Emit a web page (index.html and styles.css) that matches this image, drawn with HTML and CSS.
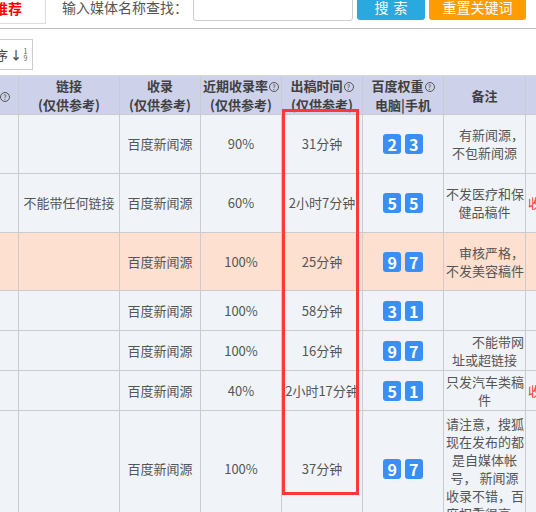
FILE: index.html
```html
<!DOCTYPE html>
<html lang="zh-CN">
<head>
<meta charset="utf-8">
<title>媒体资源</title>
<link rel="stylesheet" href="styles.css">
</head>
<body>
<div class="topbar">
  <div class="tab"><span class="tab-text">热门推荐</span></div>
  <span class="label">输入媒体名称查找：</span>
  <input class="search-input" type="text">
  <button class="btn btn-search">搜 索</button>
  <button class="btn btn-reset">重置关键词</button>
</div>
<div class="toolbar">
  <div class="sort-box"><span class="sort-text">默认排序</span><span class="sort-ico"><span class="arrow">↓</span><span class="nums"><i>1</i><i>9</i></span></span></div>
</div>
<table class="media">
  <colgroup>
    <col class="c0"><col class="c1"><col class="c2"><col class="c3"><col class="c4"><col class="c5"><col class="c6"><col class="c7">
  </colgroup>
  <thead>
    <tr>
      <th class="first">参考价格<span class="q">?</span></th>
      <th>链接<br>(仅供参考)</th>
      <th>收录<br>(仅供参考)</th>
      <th>近期收录率<span class="q">?</span><br>(仅供参考)</th>
      <th>出稿时间<span class="q">?</span><br>(仅供参考)</th>
      <th>百度权重<span class="q">?</span><br>电脑|手机</th>
      <th>备注</th>
      <th class="last"></th>
    </tr>
  </thead>
  <tbody>
    <tr class="h59">
      <td></td><td></td><td>百度新闻源</td><td>90%</td><td>31分钟</td>
      <td><span class="badge">2</span><span class="badge">3</span></td>
      <td class="note">　有新闻源，<br>不包新闻源</td>
      <td class="last"></td>
    </tr>
    <tr class="h59">
      <td></td><td>不能带任何链接</td><td>百度新闻源</td><td>60%</td><td>2小时7分钟</td>
      <td><span class="badge">5</span><span class="badge">5</span></td>
      <td class="note">不发医疗和保<br>健品稿件</td>
      <td class="last">收录快</td>
    </tr>
    <tr class="h58 hot">
      <td></td><td></td><td>百度新闻源</td><td>100%</td><td>25分钟</td>
      <td><span class="badge">9</span><span class="badge">7</span></td>
      <td class="note">　审核严格，<br>不发美容稿件</td>
      <td class="last"></td>
    </tr>
    <tr class="h40">
      <td></td><td></td><td>百度新闻源</td><td>100%</td><td>58分钟</td>
      <td><span class="badge">3</span><span class="badge">1</span></td>
      <td class="note"></td>
      <td class="last"></td>
    </tr>
    <tr class="h40">
      <td></td><td></td><td>百度新闻源</td><td>100%</td><td>16分钟</td>
      <td><span class="badge">9</span><span class="badge">7</span></td>
      <td class="note">　　不能带网<br>址或超链接</td>
      <td class="last"></td>
    </tr>
    <tr class="h40">
      <td></td><td></td><td>百度新闻源</td><td>40%</td><td>2小时17分钟</td>
      <td><span class="badge">5</span><span class="badge">1</span></td>
      <td class="note">只发汽车类稿<br>件</td>
      <td class="last">收录快</td>
    </tr>
    <tr class="h116">
      <td></td><td></td><td>百度新闻源</td><td>100%</td><td>37分钟</td>
      <td><span class="badge">9</span><span class="badge">7</span></td>
      <td class="note">请注意，搜狐<br>现在发布的都<br>是自媒体帐<br>号，&nbsp;新闻源<br>收录不错，百<br>度权重很高。</td>
      <td class="last"></td>
    </tr>
  </tbody>
</table>
<div class="highlight"></div>
</body>
</html>
```
FILE: styles.css
```css
html, body {
  margin: 0;
  padding: 0;
  overflow: hidden;
}
body {
  width: 536px;
  height: 512px;
  position: relative;
  font-family: "Microsoft YaHei", "Noto Sans CJK SC", sans-serif;
  color: #555;
  background: #fff;
}

/* top search bar */
.topbar {
  display: flex;
  align-items: flex-start;
  margin-top: -12px;
  height: 41px;
  box-sizing: border-box;
  border-bottom: 1px solid #bdbdbd;
}
.tab {
  box-sizing: border-box;
  width: 104px;
  height: 32px;
  margin-top: 4px;
  margin-left: -58px;
  border: 1px solid #dedede;
  display: flex;
  align-items: center;
  justify-content: center;
}
.tab-text {
  color: #ff0000;
  font-size: 14px;
  font-weight: bold;
}
.label {
  margin-left: 16px;
  margin-top: 9px;
  font-size: 14px;
  line-height: 20px;
  color: #555;
}
.search-input {
  box-sizing: border-box;
  margin-left: 5px;
  margin-top: 3px;
  width: 160px;
  height: 30px;
  border: 1px solid #ccc;
  border-radius: 3px;
  padding: 0 6px;
  background: #fff;
}
.btn {
  box-sizing: border-box;
  margin-top: 6px;
  height: 26px;
  border: 0;
  border-radius: 3px;
  color: #fff;
  font-family: "Microsoft YaHei", "Noto Sans CJK SC", sans-serif;
  font-size: 14px;
  line-height: 26px;
  padding: 0;
}
.btn-search {
  margin-left: 4px;
  width: 68px;
  background: #2aa8e0;
  word-spacing: 2px;
}
.btn-reset {
  margin-left: 4px;
  width: 97px;
  background: #ff9c00;
}

/* sort */
.toolbar {
  margin-top: 10px;
  display: flex;
}
.sort-box {
  box-sizing: border-box;
  width: 92px;
  height: 31px;
  margin-left: -59px;
  border: 1px solid #ccc;
  display: flex;
  align-items: center;
  justify-content: flex-end;
  gap: 2px;
  padding-right: 4px;
  font-size: 13px;
  color: #444;
}
.sort-text {
  white-space: nowrap;
}
.sort-ico {
  display: inline-flex;
  align-items: center;
  gap: 1px;
}
.sort-ico .arrow {
  font-size: 12px;
  font-weight: bold;
  line-height: 14px;
  color: #555;
}
.sort-ico .nums {
  display: inline-flex;
  flex-direction: column;
  align-items: center;
  width: 5px;
}
.sort-ico .nums i {
  font-style: normal;
  font-size: 7px;
  line-height: 7px;
  color: #555;
}

/* table */
.media {
  margin-top: 5px;
  margin-left: -81px;
  border-collapse: separate;
  border-spacing: 0;
  table-layout: fixed;
  width: 687px;
}
.c0 { width: 100px; }
.c1 { width: 101px; }
.c2, .c3, .c4, .c5 { width: 81px; }
.c6 { width: 82px; }
.c7 { width: 80px; }

.media th,
.media td {
  box-sizing: border-box;
  border-right: 1px solid #cbcbcb;
  border-bottom: 1px solid #cbcbcb;
  padding: 0 2px;
  text-align: center;
  vertical-align: middle;
  font-size: 13px;
}
.media th {
  border-top: 1px solid #d9d9d9;
  background: #cdd1ea;
  height: 40px;
  line-height: 19px;
  color: #3f3f3f;
  font-weight: bold;
  white-space: nowrap;
  padding: 0;
}
.media th.first {
  text-align: right;
  padding-right: 8px;
}
.media td {
  background: #f0f4f8;
  color: #555;
  line-height: 18px;
}
.media tr.hot td {
  background: #fde0cf;
}
.h59 td { height: 59px; }
.h58 td { height: 58px; }
.h40 td { height: 40px; }
.h116 td { height: 116px; }

.media td.note {
  white-space: nowrap;
  padding: 0 2px;
}
.media td.last {
  text-align: left;
  color: #ff3333;
  white-space: nowrap;
  overflow: hidden;
  padding-left: 2px;
}

.q {
  display: inline-block;
  box-sizing: border-box;
  width: 10px;
  height: 10px;
  border: 1px solid #555;
  border-radius: 50%;
  font-size: 7px;
  line-height: 8px;
  text-align: center;
  font-weight: normal;
  color: #444;
  vertical-align: 1px;
  margin-left: 1px;
}

.badge {
  display: inline-block;
  width: 18px;
  height: 20px;
  line-height: 20px;
  margin: 0 1.7px;
  border-radius: 3px;
  background: #3a8ff6;
  color: #fff;
  font-size: 16px;
  font-weight: 600;
  text-align: center;
  vertical-align: middle;
}

/* annotation box drawn over the column */
.highlight {
  position: absolute;
  left: 282px;
  top: 109px;
  width: 77px;
  height: 386px;
  box-sizing: border-box;
  border: 3px solid #ff3737;
  pointer-events: none;
}
```
